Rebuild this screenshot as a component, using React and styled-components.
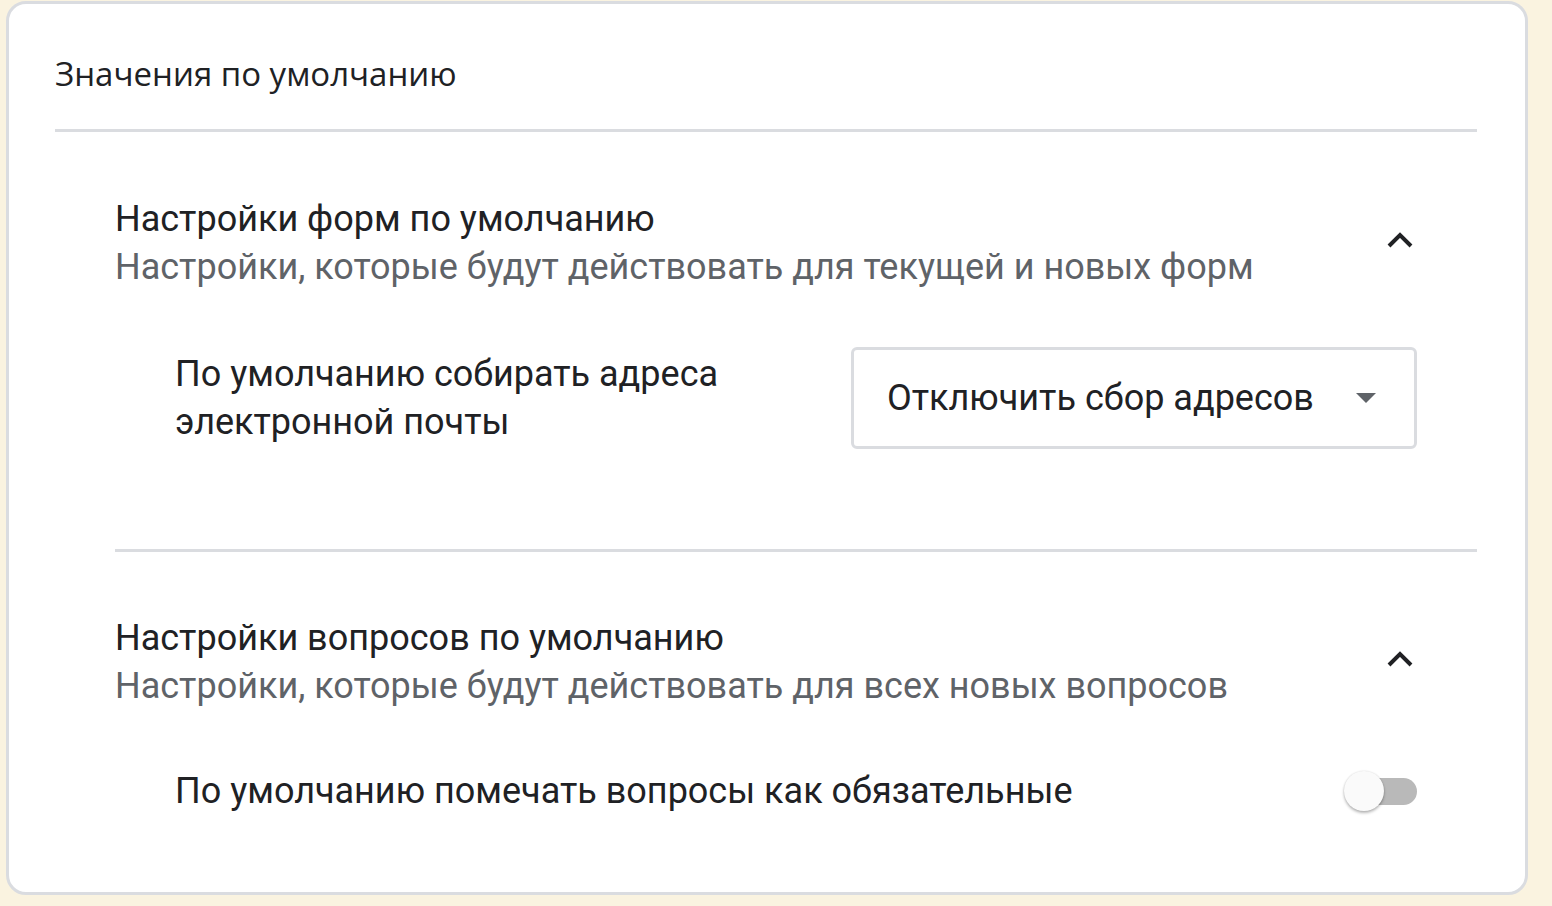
import styled, { createGlobalStyle } from "styled-components";

const GlobalStyle = createGlobalStyle`
  * { box-sizing: border-box; }
  body {
    margin: 0;
    background: #faf3e0;
    font-family: Roboto, "Liberation Sans", sans-serif;
    color: #202124;
  }
`;

const Page = styled.div`
  padding: 1px 0 0 6px;
  width: 1552px;
  height: 906px;
`;

const Card = styled.div`
  width: 1522px;
  height: 894px;
  background: #fff;
  border: 3px solid #dadce0;
  border-radius: 20px;
  padding: 0 48px 0 46px;
`;

const CardTitle = styled.div`
  font-family: "Open Sans", Roboto, sans-serif;
  font-size: 33px;
  line-height: 48px;
  padding-top: 46px;
  height: 128px;
  border-bottom: 3px solid #dadce0;
`;

const Section = styled.div`
  padding: ${(p) => p.$top}px 60px 0;
  border-bottom: ${(p) => (p.$divider ? "3px solid #dadce0" : "none")};
  margin-left: ${(p) => (p.$divider ? "60px" : "0")};
  padding-left: ${(p) => (p.$divider ? "0" : "60px")};
  height: ${(p) => p.$height}px;
`;

const SectionHeader = styled.div`
  display: flex;
  align-items: center;
  justify-content: space-between;
`;

const Titles = styled.div`
  display: flex;
  flex-direction: column;
`;

const Title = styled.div`
  font-size: 36px;
  line-height: 48px;
  color: #202124;
`;

const Subtitle = styled.div`
  font-size: 36px;
  line-height: 48px;
  color: #5f6368;
`;

const Chevron = styled.svg`
  width: 26px;
  height: 16px;
  margin: 0 4px 6px 0;
`;

const Row = styled.div`
  display: flex;
  align-items: center;
  justify-content: space-between;
  padding-left: 60px;
  margin-top: ${(p) => p.$top}px;
`;

const Label = styled.div`
  font-size: 36px;
  line-height: 48px;
  color: #202124;
  max-width: ${(p) => p.$max || "none"};
`;

const Select = styled.div`
  width: 566px;
  height: 102px;
  border: 3px solid #dadce0;
  border-radius: 6px;
  display: flex;
  align-items: center;
  justify-content: space-between;
  padding: 0 38px 0 33px;
  font-size: 36px;
  color: #202124;
`;

const Caret = styled.span`
  width: 0;
  height: 0;
  border-left: 10px solid transparent;
  border-right: 10px solid transparent;
  border-top: 10px solid #5f6368;
`;

const Switch = styled.div`
  position: relative;
  width: 73px;
  height: 40px;
  display: flex;
  align-items: center;
  justify-content: flex-end;
`;

const Track = styled.div`
  width: 68px;
  height: 27px;
  border-radius: 14px;
  background: #b9b9b9;
`;

const Knob = styled.div`
  position: absolute;
  left: 0;
  top: 0;
  width: 40px;
  height: 40px;
  border-radius: 50%;
  background: #fafafa;
  box-shadow: 0 2px 3px rgba(0, 0, 0, 0.28), 0 0 2px rgba(0, 0, 0, 0.12);
`;

const ChevronUp = () => (
  <Chevron viewBox="0 0 26 16">
    <path d="M2 14 L13 3 L24 14" fill="none" stroke="#202124" strokeWidth="4" />
  </Chevron>
);

export default function App() {
  return (
    <>
      <GlobalStyle />
      <Page>
        <Card>
          <CardTitle>Значения по умолчанию</CardTitle>
          <Section $top={63} $height={420} $divider>
            <SectionHeader>
              <Titles>
                <Title>Настройки форм по умолчанию</Title>
                <Subtitle>Настройки, которые будут действовать для текущей и новых форм</Subtitle>
              </Titles>
              <ChevronUp />
            </SectionHeader>
            <Row $top={56}>
              <Label $max="600px">По умолчанию собирать адреса электронной почты</Label>
              <Select>
                Отключить сбор адресов
                <Caret />
              </Select>
            </Row>
          </Section>
          <Section $top={62} $height={339}>
            <SectionHeader>
              <Titles>
                <Title>Настройки вопросов по умолчанию</Title>
                <Subtitle>Настройки, которые будут действовать для всех новых вопросов</Subtitle>
              </Titles>
              <ChevronUp />
            </SectionHeader>
            <Row $top={57}>
              <Label>По умолчанию помечать вопросы как обязательные</Label>
              <Switch>
                <Track />
                <Knob />
              </Switch>
            </Row>
          </Section>
        </Card>
      </Page>
    </>
  );
}
